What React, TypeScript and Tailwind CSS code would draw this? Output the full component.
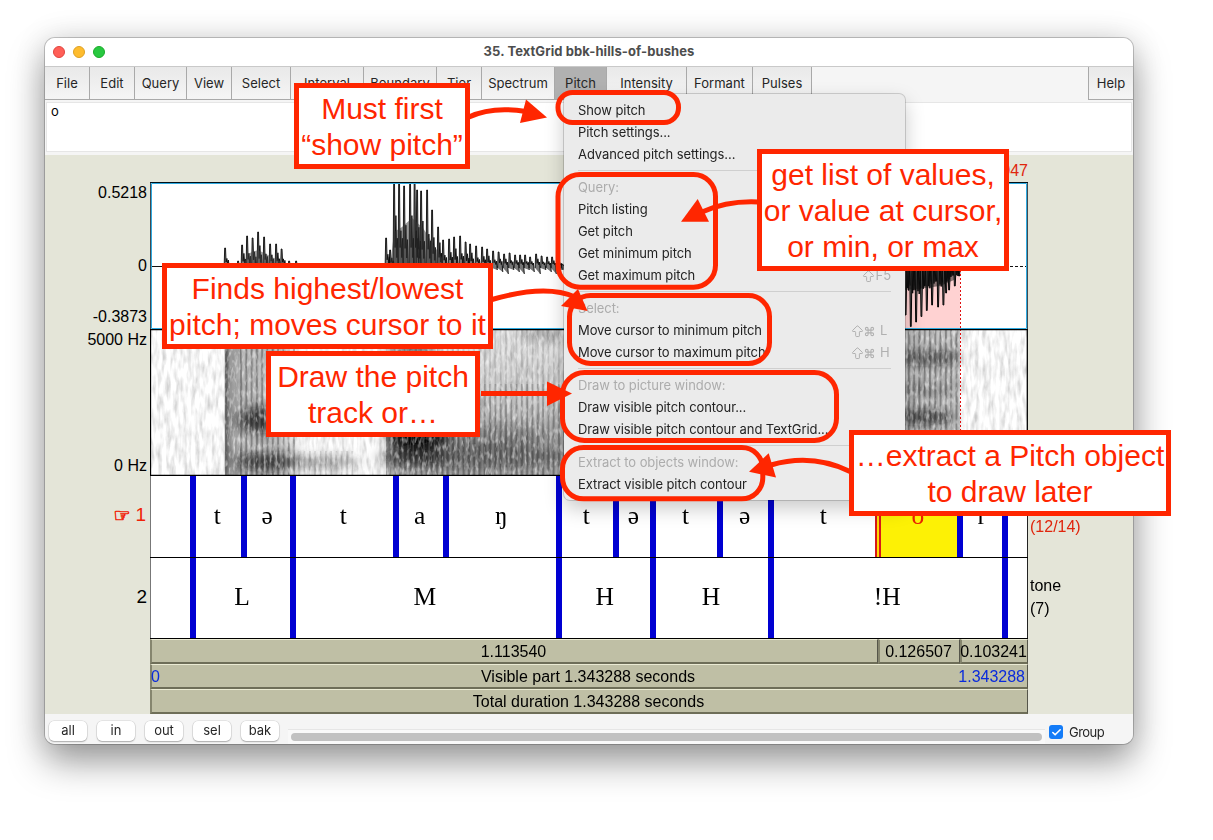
import React from "react";
import { ArrowBigUp, Command, Check } from "lucide-react";

const RED = "#ff2600";

const menus: { label: string; cls: string }[] = [
  { label: "File", cls: "w-[45px]" },
  { label: "Edit", cls: "w-[45px]" },
  { label: "Query", cls: "w-[52px]" },
  { label: "View", cls: "w-[45px]" },
  { label: "Select", cls: "w-[59px]" },
  { label: "Interval", cls: "w-[73px]" },
  { label: "Boundary", cls: "w-[73px]" },
  { label: "Tier", cls: "w-[45px]" },
  { label: "Spectrum", cls: "w-[73px]" },
  { label: "Pitch", cls: "w-[52px]" },
  { label: "Intensity", cls: "w-[80px]" },
  { label: "Formant", cls: "w-[66px]" },
  { label: "Pulses", cls: "w-[59px]" },
];

function MenuBar() {
  return (
    <div className="flex h-[34px] shrink-0 border-t border-[#c9c9c9] bg-[#f5f5f5] text-[13px] tracking-[0.02px] text-[#262626]">
      {menus.map((m) => (
        <div
          key={m.label}
          className={`${m.cls} flex shrink-0 items-center justify-center border-r border-b border-[#a9a9a9] pt-[2px] ${
            m.label === "Pitch" ? "bg-[#b1b1b1]" : "bg-linear-to-b from-[#e9e9e9] to-[#f5f5f5]"
          }`}
        >
          {m.label}
        </div>
      ))}
      <div className="ml-auto flex w-[45px] items-center justify-center border-b border-l border-[#a9a9a9] bg-linear-to-b from-[#e9e9e9] to-[#f5f5f5] pt-[2px]">
        Help
      </div>
    </div>
  );
}

/* Waveform peaks: x and y inside the 878 x 146 sound view, baseline at 84 */
const upPeaks: [number, number][] = [
  [75, 66], [88, 79], [92, 63], [97, 54], [102.5, 56], [108, 50], [114, 55], [120, 62], [126, 62], [131.5, 67], [139, 79], [146, 79],
  [236, 56], [240, 68], [244, 0], [249, 0], [254, 4], [260, 0], [264.5, 0], [267, 8], [271, 9], [277, 8], [282, 28], [288, 45],
  [293, 58], [299, 57], [304, 55], [310, 54], [315.5, 60], [320, 62], [326, 64], [332, 65], [337, 67], [343, 69], [348.5, 70],
  [354, 72], [359.5, 71], [365, 73], [370, 73], [375, 73], [380, 75], [386, 72], [391.5, 74], [397, 75], [402, 75], [408, 76], [412, 82],
];
const downPeaks: [number, number][] = [
  [755.5, 133], [760.7, 144.5], [766, 140], [771.3, 134.5], [776.7, 128.5], [782, 123], [788, 125], [793.3, 123], [796, 111], [799, 108], [804.7, 104], [809, 94],
];

function wavePath() {
  let d = "";
  upPeaks.forEach(([x, y], i) => {
    const h = 84 - y;
    const below = x > 335 ? 4 + (i % 3) * 2 : 2;
    d += `M${x - 0.9},86L${x - 0.3},${y}L${x + 0.5},${y}L${x + 1.1},${84 - h * 0.22}L${x + 1.9},${84 - h * (0.42 + (i % 3) * 0.09)}L${x + 2.8},${84 - h * 0.1}L${x + 3.4},${84 - h * 0.33}L${x + 4.3},${84 + below}`;
  });
  return d;
}

function downPath() {
  let d = "";
  downPeaks.forEach(([x, y], i) => {
    const h = y - 84;
    d += `M${x - 1},82L${x - 0.3},${y}L${x + 0.5},${y}L${x + 1.3},86L${x + 2},${84 + h * 0.45}L${x + 2.6},86L${x + 3.2},${84 + h * (0.5 - (i % 2) * 0.1)}L${x + 4},84L${x + 4.6},${84 + h * 0.4}`;
  });
  return d;
}

function Waveform() {
  return (
    <svg className="block h-[147px] w-[878px]" viewBox="0 0 878 147">
      <rect width="878" height="147" fill="#fff" />
      <rect x="727" width="83" height="147" fill="#ffd2d2" />
      <path d="M0 84.5H878" stroke="#58a6cf" strokeDasharray="3 2" />
      <path d={wavePath()} fill="#777" stroke="#0a0a0a" strokeWidth=".9" strokeLinejoin="round" />
      <path d="M240 86 244 50 252 45 262 36 273 46 283 62 292 76 292 86Z" fill="#333" opacity=".5" />
      <path d="M93 86 97 72 108 68 120 74 130 79 136 86Z" fill="#444" opacity=".5" />
      <path d={downPath()} fill="#777" stroke="#050505" strokeWidth="1" />
      <path d="M755 84 755 108 775 106 790 104 804 98 810 88 812 84Z" fill="#111" opacity=".5" />
      <path d="M0 84.5H12M20 84.5H76M150 84.5H236M812 84.5 818 87 821 84.5 823 88 826 84.5 838 85.500 850 84.5" fill="none" stroke="#111" />
      <path d="M850 84.5H878" stroke="#111" strokeDasharray="3 2" />
      <path d="M810.5 0V147" stroke="#e01010" strokeDasharray="2 2" />
      <path d="M.5 0V147M877.5 0V147" stroke="#3f4a50" />
      <path d="M1.5 1.5H876.5V146.5H1.5Z" fill="none" stroke="#2faae0" />
      <path d="M0 .5H878" stroke="#001018" />
    </svg>
  );
}

function Spectrogram() {
  return (
    <svg className="block h-[147px] w-[878px]" viewBox="0 0 878 147">
      <defs>
        <filter id="dark" x="0" y="0" width="1" height="1">
          <feTurbulence type="fractalNoise" baseFrequency=".24 .06" numOctaves="2" seed="4" />
          <feColorMatrix values="0 0 0 0 .4  0 0 0 0 .4  0 0 0 0 .4  1.7 0 0 0 -.68" />
        </filter>
        <filter id="light" x="0" y="0" width="1" height="1">
          <feTurbulence type="fractalNoise" baseFrequency=".35 .13" numOctaves="2" seed="11" />
          <feColorMatrix values="0 0 0 0 1  0 0 0 0 1  0 0 0 0 1  2.4 0 0 0 -1.15" />
        </filter>
        <filter id="soft" x="-20%" y="-20%" width="140%" height="140%">
          <feGaussianBlur stdDeviation="7 5" />
        </filter>
        <filter id="edge" x="-20%" y="-20%" width="140%" height="140%">
          <feGaussianBlur stdDeviation="1.2 6" />
        </filter>
        <linearGradient id="v1">
          <stop offset="0" stopColor="#444" stopOpacity=".62" />
          <stop offset=".2" stopColor="#555" stopOpacity=".45" />
          <stop offset=".7" stopColor="#555" stopOpacity=".4" />
          <stop offset="1" stopColor="#777" stopOpacity="0" />
        </linearGradient>
        <linearGradient id="v2" x2="0" y2="1">
          <stop offset="0" stopColor="#777" stopOpacity=".15" />
          <stop offset=".5" stopColor="#555" stopOpacity=".34" />
          <stop offset=".75" stopColor="#444" stopOpacity=".5" />
          <stop offset="1" stopColor="#555" stopOpacity=".55" />
        </linearGradient>
        <pattern id="pulse" width="5.3" height="147" patternUnits="userSpaceOnUse">
          <rect width="1.8" height="147" fill="#222" opacity=".32" />
          <rect x="3" width="1.2" height="147" fill="#fff" opacity=".2" />
        </pattern>
        <clipPath id="frame">
          <rect width="878" height="147" />
        </clipPath>
      </defs>
      <rect width="878" height="147" fill="#fff" />
      <g clipPath="url(#frame)">
        <rect width="878" height="147" filter="url(#dark)" opacity=".72" />
        <rect x="75" width="80" height="147" fill="url(#v1)" />
        <rect x="236" width="185" height="147" fill="url(#v2)" />
        <rect x="727" width="83" height="147" fill="#555" opacity=".4" />
        <g filter="url(#soft)">
          <ellipse cx="112" cy="91" rx="24" ry="13" fill="#111" opacity=".75" />
          <ellipse cx="115" cy="133" rx="30" ry="9" fill="#111" opacity=".7" />
          <ellipse cx="165" cy="133" rx="45" ry="7" fill="#333" opacity=".4" />
          <ellipse cx="268" cy="108" rx="30" ry="13" fill="#000" opacity=".98" />
          <ellipse cx="265" cy="128" rx="35" ry="9" fill="#111" opacity=".65" />
          <ellipse cx="287" cy="75" rx="40" ry="18" fill="#222" opacity=".5" />
          <ellipse cx="330" cy="127" rx="85" ry="14" fill="#222" opacity=".45" />
          <ellipse cx="340" cy="106" rx="60" ry="8" fill="#333" opacity=".35" />
          <ellipse cx="262" cy="14" rx="24" ry="14" fill="#333" opacity=".6" />
          <ellipse cx="390" cy="5" rx="22" ry="9" fill="#555" opacity=".35" />
          <ellipse cx="776" cy="29" rx="35" ry="8" fill="#111" opacity=".55" />
          <ellipse cx="766" cy="61" rx="38" ry="7" fill="#333" opacity=".35" />
          <ellipse cx="768" cy="88" rx="36" ry="8" fill="#111" opacity=".65" />
        </g>
        <rect x="90" width="55" height="147" fill="url(#pulse)" />
        <rect x="145" y="122" width="60" height="25" fill="url(#pulse)" opacity=".4" />
        <rect x="240" y="55" width="180" height="92" fill="url(#pulse)" opacity=".9" />
        <rect x="240" width="180" height="55" fill="url(#pulse)" opacity=".4" />
        <rect x="755" width="55" height="147" fill="url(#pulse)" />
        <rect x="75" width="3" height="147" fill="#222" opacity=".45" filter="url(#edge)" />
        <rect width="878" height="147" filter="url(#light)" opacity=".6" />
      </g>
      <path d="M810.5 0V147" stroke="#e01010" strokeDasharray="2 2" />
      <path d="M.5 .5H877.3V146.5H.5Z" fill="none" stroke="#000" strokeWidth="1.3" />
    </svg>
  );
}

/* Positions of the boundaries, in pixels from the left edge of the view */
const phones = {
  bounds: [43, 93.5, 143, 245.5, 296, 408.5, 466, 502.7, 570.3, 621, 727.7, 810.3, 855.3],
  texts: ["", "t", "ə", "t", "a", "ŋ", "t", "ə", "t", "ə", "t", "o", "r", ""],
};
const tones = {
  bounds: [43, 143, 408.5, 502.7, 621, 855.3],
  texts: ["", "L", "M", "H", "H", "!H", ""],
};

function Tier({ bounds, texts, selected }: { bounds: number[]; texts: string[]; selected?: number }) {
  return (
    <div className="flex h-full w-[878px]">
      {texts.map((t, i) => {
        const from = i === 0 ? 0 : bounds[i - 1] + 3;
        const to = i === texts.length - 1 ? 878 : bounds[i] - 3;
        const isSel = i === selected;
        return (
          <React.Fragment key={i}>
            <div
              style={{ width: to - from }}
              className={`flex shrink-0 items-center justify-center pr-[2px] pb-[2px] font-[Liberation_Serif,serif] text-[25.5px] leading-none ${
                isSel ? "bg-[#fdf105] text-[#e82000]" : ""
              }`}
            >
              {t}
            </div>
            {i < bounds.length &&
              (i + 1 === selected ? (
                <div className="w-[6px] shrink-0 border-x-2 border-[#d81818] bg-[#fdd905]" />
              ) : (
                <div className="w-[6px] shrink-0 bg-[#0000d2]" />
              ))}
          </React.Fragment>
        );
      })}
    </div>
  );
}

const barCls =
  "flex h-[25px] items-center justify-center border-r border-b-2 border-l-2 border-t border-b-[#6e6e58] border-l-[#85856e] border-r-[#55554a] border-t-[#ebebd4] bg-[#bfbfa5] pt-[2px] pr-[2px]";

function Canvas() {
  return (
    <div className="flex h-[559px] shrink-0 bg-[#e4e5d8] font-[Liberation_Sans,sans-serif] text-[16px] leading-[18px] text-black">
      <div className="flex w-[105px] flex-col items-end pr-[3px]">
        <div className="flex h-[174px] flex-col items-end pt-[29px]">
          <span>0.5218</span>
          <span className="mt-[55px]">0</span>
          <span className="mt-[33px]">-0.3873</span>
        </div>
        <div className="flex h-[147px] flex-col items-end justify-between pt-[2px] pb-px">
          <span>5000 Hz</span>
          <span>0 Hz</span>
        </div>
        <div className="flex h-[78px] items-center gap-[5px] pr-px text-[19px] text-[#f02208]">
          <span className="font-[DejaVu_Sans,sans-serif] text-[19px] font-bold [-webkit-text-stroke:0.7px_#f02208]">☞</span>
          <span>1</span>
        </div>
        <div className="flex h-[86px] items-center text-[19px]">2</div>
      </div>
      <div className="flex w-[878px] flex-col">
        <div className="flex h-[27px] items-center justify-end pt-[5px] text-[#e0250c]">1.240047</div>
        <Waveform />
        <Spectrogram />
        <div className="h-[163px] border-r border-l border-r-[#222] border-l-[#777] bg-white">
          <div className="-mx-px h-[82px] border-b border-black">
            <Tier {...phones} selected={11} />
          </div>
          <div className="-mx-px h-[81px] border-b border-black">
            <Tier {...tones} />
          </div>
        </div>
        <div className="flex">
          <div className={`${barCls} w-[728px]`}>1.113540</div>
          <div className={`${barCls} w-[82px]`}>0.126507</div>
          <div className={`${barCls} w-[68px]`}>0.103241</div>
        </div>
        <div className={barCls}>
          <span className="-ml-px flex-1 text-[#0a2bdc]">0</span>
          <span>Visible part 1.343288 seconds</span>
          <span className="flex-1 text-right text-[#0a2bdc]">1.343288</span>
        </div>
        <div className={barCls}>Total duration 1.343288 seconds</div>
      </div>
      <div className="flex flex-1 flex-col pl-[2px] leading-[23px]">
        <span className="mt-[360px] text-[#e0250c]">(12/14)</span>
        <span className="mt-[36px]">tone</span>
        <span>(7)</span>
      </div>
    </div>
  );
}

function BottomBar() {
  return (
    <div className="flex flex-1 items-start bg-[#f5f5f5] pl-[4px] text-[13px] text-[#262626]">
      <div className="flex gap-[10px] pt-[6.5px]">
        {["all", "in", "out", "sel", "bak"].map((b) => (
          <div
            key={b}
            className="flex h-[20.5px] w-[38px] items-center justify-center rounded-[5px] bg-white shadow-[0_0_0_0.5px_rgba(0,0,0,0.13),0_1px_1.5px_rgba(0,0,0,0.25)]"
          >
            {b}
          </div>
        ))}
      </div>
      <div className="mt-[15px] ml-[9px] h-[15px] w-[757px] border-t border-[#e6e6e6] bg-[#f9f9f9] px-[3px] pt-[3px]">
        <div className="h-[8px] rounded-full bg-[#c1c1c1]" />
      </div>
      <div className="mt-[11px] ml-[4px] flex h-[14px] w-[14px] items-center justify-center rounded-[3px] bg-[#147cf8]">
        <Check size={11} color="#fff" strokeWidth={3.5} />
      </div>
      <span className="mt-[9px] ml-[6px] tracking-[-0.55px]">Group</span>
    </div>
  );
}

type Item = { text: string; head?: boolean; keys?: React.ReactNode };
const shift = <ArrowBigUp size={15} strokeWidth={1.6} className="-mr-[1px]" />;
const cmd = <Command size={11} strokeWidth={2.2} />;
const groups: Item[][] = [
  [{ text: "Show pitch" }, { text: "Pitch settings..." }, { text: "Advanced pitch settings..." }],
  [
    { text: "Query:", head: true },
    { text: "Pitch listing" },
    { text: "Get pitch" },
    { text: "Get minimum pitch" },
    { text: "Get maximum pitch", keys: <>{shift}<span className="ml-px">F5</span></> },
  ],
  [
    { text: "Select:", head: true },
    { text: "Move cursor to minimum pitch", keys: <>{shift}{cmd}<span className="ml-[5px] w-[11px]">L</span></> },
    { text: "Move cursor to maximum pitch", keys: <>{shift}{cmd}<span className="ml-[5px] w-[11px]">H</span></> },
  ],
  [
    { text: "Draw to picture window:", head: true },
    { text: "Draw visible pitch contour..." },
    { text: "Draw visible pitch contour and TextGrid..." },
  ],
  [{ text: "Extract to objects window:", head: true }, { text: "Extract visible pitch contour" }],
];

function PitchMenu() {
  return (
    <div className="absolute top-[94px] left-[564px] w-[341px] rounded-[6px] bg-[#ebebeb] py-[5px] pr-[14px] pl-[14px] text-[13px] tracking-[-0.08px] text-[#232323] shadow-[0_0_0_1px_rgba(0,0,0,0.16),0_8px_20px_rgba(0,0,0,0.22)]">
      {groups.map((g, gi) => (
        <React.Fragment key={gi}>
          {gi > 0 && (
            <div className="flex h-[11px] items-center">
              <div className="h-px w-full bg-[#cfcfcf]" />
            </div>
          )}
          {g.map((it) => (
            <div key={it.text} className={`flex h-[22px] items-center justify-between pt-[2px] whitespace-nowrap ${it.head ? "text-[#acacac]" : ""}`}>
              <span>{it.text}</span>
              {it.keys && <span className="flex items-center text-[#b0b0b0]">{it.keys}</span>}
            </div>
          ))}
        </React.Fragment>
      ))}
    </div>
  );
}

const callouts: { cls: string; lines: string[] }[] = [
  { cls: "left-[294px] top-[83px] w-[176px] h-[86px]", lines: ["Must first", "“show pitch”"] },
  { cls: "left-[757px] top-[149px] w-[252px] h-[122px]", lines: ["get list of values,", "or value at cursor,", "or min, or max"] },
  { cls: "left-[162px] top-[263px] w-[331px] h-[86px]", lines: ["Finds highest/lowest", "pitch; moves cursor to it"] },
  { cls: "left-[266px] top-[351px] w-[214px] h-[86px]", lines: ["Draw the pitch", "track or…"] },
  { cls: "left-[849px] top-[430px] w-[322px] h-[86px]", lines: ["…extract a Pitch object", "to draw later"] },
];

function Annotations() {
  return (
    <>
      <svg className="absolute top-0 left-0 h-[840px] w-[1213px]" viewBox="0 0 1213 840">
        <g fill="none" stroke={RED} strokeWidth="5">
          <rect x="558" y="92.5" width="120.5" height="30" rx="14.5" />
          <rect x="558" y="174.5" width="157.5" height="112.7" rx="22" />
          <rect x="569.5" y="295.5" width="200" height="68" rx="21" />
          <rect x="562.5" y="372.5" width="274" height="68" rx="22" />
          <rect x="562.5" y="447.5" width="200.3" height="51.3" rx="21" />
          <path d="M469 117Q492 106 526 111.5" />
          <path d="M758 202Q728 200.500 702 212" />
          <path d="M492 299.500Q546 284 575 297" />
          <path d="M481 393.500H550" />
          <path d="M850 471.500Q812 453 771 465" />
        </g>
        <g fill={RED}>
          <path d="M526 99.500 547 117.500 520 123Z" />
          <path d="M681 221.700 697.700 199 709 221.700Z" />
          <path d="M587.500 311 578 289 561 306Z" />
          <path d="M547 381.500 572 393.500 547 406Z" />
          <path d="M749 471.700 768.700 453.300 776 477.500Z" />
        </g>
      </svg>
      {callouts.map((c) => (
        <div
          key={c.lines[0]}
          className={`${c.cls} absolute flex flex-col items-center border-[5px] border-[#ff2600] bg-white pt-[3px] font-[Liberation_Sans,sans-serif] text-[30px] leading-[36px] whitespace-nowrap text-[#ff2600]`}
        >
          {c.lines.map((l) => (
            <div key={l}>{l}</div>
          ))}
        </div>
      ))}
    </>
  );
}

export default function App() {
  return (
    <div className="relative h-[840px] w-[1213px] overflow-hidden bg-white pt-[38px] pl-[45px] font-[Inter,sans-serif]">
      <div className="flex h-[706px] w-[1088px] flex-col overflow-hidden rounded-[10px] bg-[#f5f5f5] shadow-[0_0_0_1px_rgba(0,0,0,0.2),0_18px_36px_rgba(0,0,0,0.38),0_0_32px_rgba(0,0,0,0.12)]">
        <div className="flex h-[28px] shrink-0 items-center bg-white pl-[8px]">
          <div className="flex w-[90px] gap-[8px]">
            <div className="h-[12px] w-[12px] rounded-full border border-[#e0443e] bg-[#ff5f57]" />
            <div className="h-[12px] w-[12px] rounded-full border border-[#dea123] bg-[#febc2e]" />
            <div className="h-[12px] w-[12px] rounded-full border border-[#1aab29] bg-[#28c840]" />
          </div>
          <div className="flex-1 pr-[98px] text-center text-[13px] font-bold tracking-[0.09px] text-[#4d4d4d]">35. TextGrid bbk-hills-of-bushes</div>
        </div>
        <MenuBar />
        <div className="mx-px mt-[2px] mb-[3px] h-[50px] shrink-0 border border-[#e6e6e6] bg-white pl-[4px] text-[13px] leading-[16px] text-black">
          o
        </div>
        <Canvas />
        <BottomBar />
      </div>
      <PitchMenu />
      <Annotations />
    </div>
  );
}
